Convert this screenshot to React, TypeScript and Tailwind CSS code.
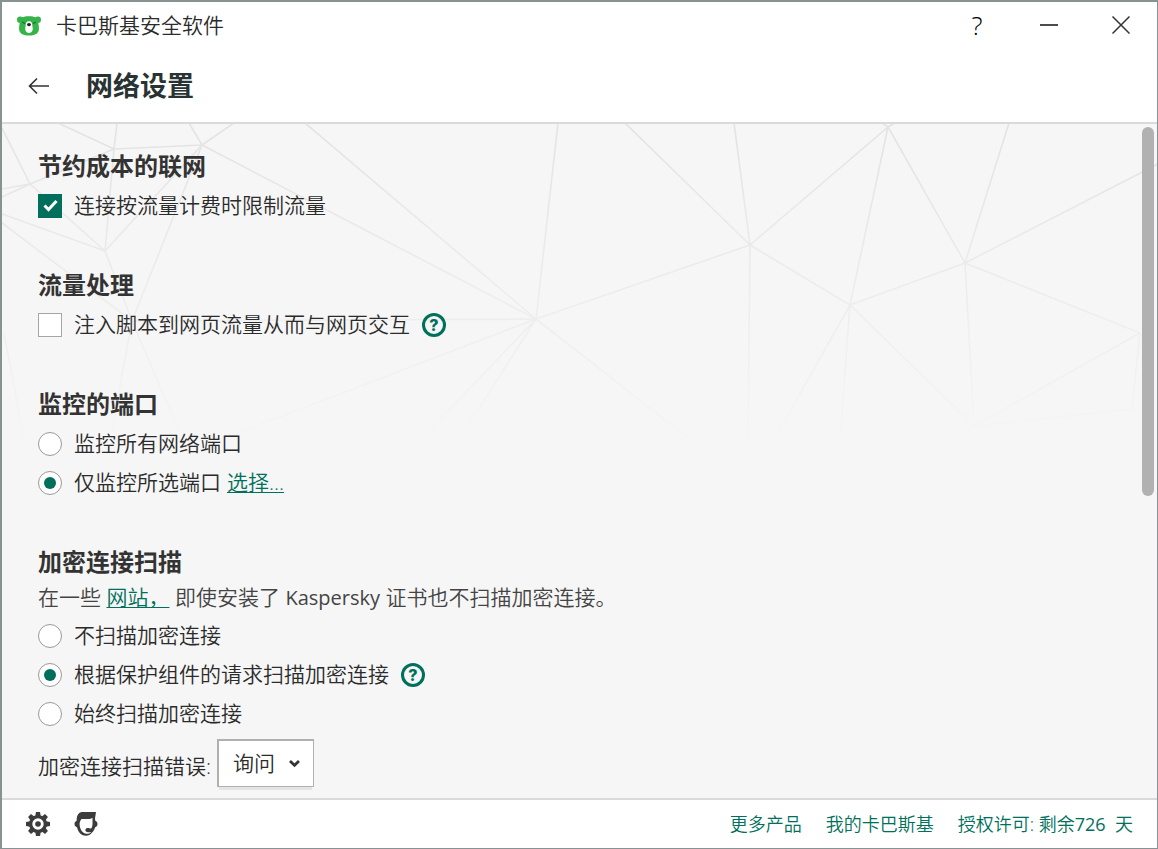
import { useState } from "react";
import type { ReactNode } from "react";

type Point = [number, number];

const MESH_LINES: [Point, Point][] = [
  [[58, 123], [114, 149]],
  [[117, 123], [114, 149]],
  [[114, 149], [202, 145]],
  [[114, 149], [30, 184]],
  [[114, 149], [105, 251]],
  [[189, 123], [202, 145]],
  [[234, 123], [202, 145]],
  [[202, 145], [105, 251]],
  [[202, 145], [132, 321]],
  [[202, 145], [536, 319]],
  [[2, 128], [30, 184]],
  [[2, 189], [30, 184]],
  [[2, 197], [30, 184]],
  [[30, 184], [105, 251]],
  [[2, 214], [105, 251]],
  [[2, 223], [132, 321]],
  [[105, 251], [132, 321]],
  [[132, 321], [536, 319]],
  [[132, 321], [110, 440]],
  [[132, 321], [183, 440]],
  [[4, 333], [24, 440]],
  [[305, 123], [536, 319]],
  [[558, 123], [536, 319]],
  [[536, 319], [750, 245]],
  [[536, 319], [688, 438]],
  [[536, 319], [230, 436]],
  [[536, 319], [425, 435]],
  [[536, 319], [459, 440]],
  [[625, 123], [750, 245]],
  [[734, 123], [750, 245]],
  [[750, 245], [888, 127]],
  [[750, 245], [850, 305]],
  [[750, 245], [748, 438]],
  [[882, 123], [888, 127]],
  [[895, 123], [888, 127]],
  [[888, 127], [850, 305]],
  [[888, 127], [965, 263]],
  [[1009, 123], [965, 263]],
  [[965, 263], [1158, 164]],
  [[965, 263], [850, 305]],
  [[965, 263], [1140, 333]],
  [[965, 263], [974, 426]],
  [[850, 305], [775, 438]],
  [[850, 305], [840, 438]],
  [[850, 305], [974, 426]],
  [[974, 426], [1140, 333]],
  [[974, 426], [1132, 409]],
  [[1140, 333], [1132, 409]],
];

function MeshBackground() {
  return (
    <svg
      className="pointer-events-none absolute inset-x-0 top-0 h-80 w-full"
      viewBox="2 124 1155 320"
      preserveAspectRatio="xMidYMin slice"
      aria-hidden="true"
    >
      <defs>
        <linearGradient id="mesh" gradientUnits="userSpaceOnUse" x1="0" y1="124" x2="0" y2="455">
          <stop offset="0" stopColor="#e3e3e3" />
          <stop offset="1" stopColor="#e3e3e3" stopOpacity="0" />
        </linearGradient>
      </defs>
      <path
        d={MESH_LINES.map(([a, b]) => `M${a[0]} ${a[1]}L${b[0]} ${b[1]}`).join("")}
        stroke="url(#mesh)"
        strokeWidth="1.6"
        fill="none"
      />
    </svg>
  );
}

function BearLogo() {
  return (
    <svg width="24" height="20" viewBox="0 0 24 20" aria-hidden="true">
      <g fill="#35b44a">
        <circle cx="3.2" cy="3.8" r="3.2" />
        <circle cx="20.8" cy="3.8" r="3.2" />
        <path d="M12 .2c3.6 0 6.600 .5 8 2.300 1.300 1.700 1.200 4 1.600 6.500.3 1.700.5 3.200.2 5.200C21.100 17.700 17.500 19.600 12 19.600S2.900 17.700 2.200 14.200c-.3-2-.1-3.500.2-5.200C2.800 6.500 2.700 4.200 4 2.500 5.400.7 8.400.2 12 .2z" />
      </g>
      <path d="M12 5.300c2.300 0 3.200 1.600 3.300 3.800.1 2 .5 2.600.5 3.700 0 2.700-1.600 4.200-3.800 4.200s-3.800-1.500-3.800-4.200c0-1.100.4-1.700.5-3.700.1-2.200 1-3.800 3.300-3.800z" fill="#fff" />
      <ellipse cx="12" cy="8.600" rx="2" ry="1.600" fill="#222" />
      <path d="M5.600 6.400l2 .8M18.400 6.400l-2 .8" stroke="#1c6b2c" strokeWidth="1.200" strokeLinecap="round" />
    </svg>
  );
}

const GEAR_ANGLES = [0, 45, 90, 135, 180, 225, 270, 315];

function GearIcon() {
  return (
    <svg width="24" height="24" viewBox="0 0 24 24" aria-hidden="true">
      <g fill="#3c3c3c">
        {GEAR_ANGLES.map((angle) => (
          <path key={angle} d="M9.300 4 10 0h4l.7 4z" transform={`rotate(${angle} 12 12)`} />
        ))}
      </g>
      <circle cx="12" cy="12" r="7.400" fill="none" stroke="#3c3c3c" strokeWidth="3.400" />
      <circle cx="12" cy="12" r="2.800" fill="#3c3c3c" />
    </svg>
  );
}

function SupportIcon() {
  return (
    <svg width="24" height="24" viewBox="0 0 24 24" aria-hidden="true">
      <path
        fill="#3c3c3c"
        d="M7.500 0H22l-1 6.500.3 2.300c1.400.5 2.200 1.500 2.200 3.200s-.8 2.800-2.300 3.300c-.7 2.200-1.700 4-3.100 5.200-1.700 2.200-3.700 3.300-6.100 3.300-4.500 0-7.900-3.500-9-8.500C1.500 14.800.5 13.700.5 12s1-2.700 2.200-3.200C2.500 4.500 4 .8 7.500 0z"
      />
      <path
        fill="#fff"
        d="M7.500 7H14c2 0 3.400-.3 4.500-1.200V12c0 1.800-.5 3.300-1.300 4.500h-1.400c-1-.8-3.700-.6-4.300.8-.6 1.600.6 2.900 2.500 2.900h3.300c-1.300 1-2.800 1.500-4.700 1.500-3.700 0-7-4.200-7-9.700 0-2 .9-4 1.900-5z"
      />
    </svg>
  );
}

function HelpButton({ label }: { label: string }) {
  return (
    <button
      type="button"
      aria-label={label}
      className="ml-3 flex size-6 items-center justify-center rounded-full border-3 border-[#00705c] font-['Inter'] text-base leading-none font-extrabold text-[#00705c]"
    >
      ?
    </button>
  );
}

function Section({ title, children }: { title: string; children: ReactNode }) {
  return (
    <section>
      <h2 className="mb-0.5 text-2xl leading-9 font-bold text-[#333]">{title}</h2>
      {children}
    </section>
  );
}

interface CheckRowProps {
  label: string;
  checked: boolean;
  onChange: (value: boolean) => void;
  children?: ReactNode;
}

function CheckRow({ label, checked, onChange, children }: CheckRowProps) {
  return (
    <div className="flex h-[39px] items-center">
      <label className="flex items-center gap-3">
        <span className="relative size-6">
          <input
            type="checkbox"
            checked={checked}
            onChange={(e) => onChange(e.target.checked)}
            className="peer block size-6 appearance-none border border-[#a6a6a6] bg-white checked:border-[#00705c] checked:bg-[#00705c]"
          />
          <svg
            className="pointer-events-none absolute inset-0 hidden peer-checked:block"
            viewBox="0 0 24 24"
            fill="none"
            stroke="#fff"
            strokeWidth="3"
            aria-hidden="true"
          >
            <path d="M6.500 11.500l4 4 8-8.500" />
          </svg>
        </span>
        {label}
      </label>
      {children}
    </div>
  );
}

interface RadioRowProps {
  name: string;
  label: string;
  checked: boolean;
  onSelect: () => void;
  children?: ReactNode;
}

function RadioRow({ name, label, checked, onSelect, children }: RadioRowProps) {
  return (
    <div className="flex h-[39px] items-center">
      <label className="flex items-center gap-3">
        <input
          type="radio"
          name={name}
          checked={checked}
          onChange={onSelect}
          className="grid size-6 appearance-none place-content-center rounded-full border border-[#999] bg-white before:size-3 before:rounded-full checked:before:bg-[#00705c]"
        />
        {label}
      </label>
      {children}
    </div>
  );
}

export default function App() {
  const [limitTraffic, setLimitTraffic] = useState(true);
  const [injectScript, setInjectScript] = useState(false);
  const [ports, setPorts] = useState("selected");
  const [scan, setScan] = useState("request");

  return (
    <div className="flex h-screen flex-col overflow-hidden border-t-2 border-r border-b border-l-2 border-[#879393] bg-white font-['Open_Sans','Noto_Sans_CJK_SC',sans-serif] text-[21px] font-[350] text-[#2b2b2b]">
      <div className="flex h-12 shrink-0 items-center pl-[15px]">
        <BearLogo />
        <h1 className="ml-[15px] flex-1 pb-0.5 leading-8">卡巴斯基安全软件</h1>
        <button type="button" aria-label="帮助" className="h-12 w-18 pb-0.5 text-[26px] leading-none text-black">
          ?
        </button>
        <button type="button" aria-label="最小化" className="flex h-12 w-18 items-center justify-center pb-0.5">
          <svg width="18" height="18" viewBox="0 0 18 18" stroke="#111" strokeWidth="1.500" aria-hidden="true">
            <path d="M0 9h18" />
          </svg>
        </button>
        <button type="button" aria-label="关闭" className="flex h-12 w-18 items-center justify-center pb-0.5">
          <svg width="18" height="18" viewBox="0 0 18 18" stroke="#333" strokeWidth="1.500" aria-hidden="true">
            <path d="M.5.5l17 17M17.500.5l-17 17" />
          </svg>
        </button>
      </div>

      <header className="flex h-[74px] shrink-0 items-center border-b-2 border-[#dadada] pl-[26px]">
        <button type="button" aria-label="返回">
          <svg width="22" height="18" viewBox="0 0 22 18" fill="none" stroke="#333" strokeWidth="1.600" aria-hidden="true">
            <path d="M9 1.500L1.500 9 9 16.500M1.500 9H21" />
          </svg>
        </button>
        <h2 className="ml-9 text-[27px] leading-10 font-bold text-[#293333]">网络设置</h2>
      </header>

      <main className="relative flex min-h-0 flex-1 overflow-hidden bg-[#f6f6f6]">
        <MeshBackground />
        <div className="relative flex flex-1 flex-col gap-[42px] pt-6 pl-9">
          <Section title="节约成本的联网">
            <CheckRow label="连接按流量计费时限制流量" checked={limitTraffic} onChange={setLimitTraffic} />
          </Section>

          <Section title="流量处理">
            <CheckRow label="注入脚本到网页流量从而与网页交互" checked={injectScript} onChange={setInjectScript}>
              <HelpButton label="关于脚本注入" />
            </CheckRow>
          </Section>

          <Section title="监控的端口">
            <RadioRow name="ports" label="监控所有网络端口" checked={ports === "all"} onSelect={() => setPorts("all")} />
            <RadioRow
              name="ports"
              label="仅监控所选端口"
              checked={ports === "selected"}
              onSelect={() => setPorts("selected")}
            >
              <a href="#ports" className="ml-1.5 text-[#00705c] underline decoration-1 underline-offset-2">
                选择...
              </a>
            </RadioRow>
          </Section>

          <Section title="加密连接扫描">
            <p className="mb-1 leading-[30px] text-[#444]">
              在一些{" "}
              <a href="#sites" className="text-[#00705c] underline decoration-1 underline-offset-2">
                网站，
              </a>{" "}
              即使安装了 <span className="text-xl leading-none font-normal">Kaspersky</span> 证书也不扫描加密连接。
            </p>
            <RadioRow name="scan" label="不扫描加密连接" checked={scan === "never"} onSelect={() => setScan("never")} />
            <RadioRow
              name="scan"
              label="根据保护组件的请求扫描加密连接"
              checked={scan === "request"}
              onSelect={() => setScan("request")}
            >
              <HelpButton label="关于加密连接扫描" />
            </RadioRow>
            <RadioRow name="scan" label="始终扫描加密连接" checked={scan === "always"} onSelect={() => setScan("always")} />
            <div className="mt-1.5 flex items-center gap-1.5">
              <label htmlFor="scan-errors" className="pt-1.5 leading-8">
                加密连接扫描错误:
              </label>
              <div className="relative">
                <select
                  id="scan-errors"
                  className="block h-12 w-[97px] appearance-none border-t-2 border-r border-b border-l-2 border-[#b0b0b0] bg-white pl-3.5 shadow-[0_5px_0_-2px_#e4e4e4]"
                >
                  <option>询问</option>
                  <option>忽略</option>
                </select>
                <svg
                  className="pointer-events-none absolute top-5 right-3.5"
                  width="11"
                  height="9"
                  viewBox="0 0 11 9"
                  fill="none"
                  stroke="#333"
                  strokeWidth="2.800"
                  aria-hidden="true"
                >
                  <path d="M1 2l4.500 4.300L10 2" />
                </svg>
              </div>
            </div>
          </Section>
        </div>
        <div className="relative mt-[3px] mr-[3px] h-[369px] w-3 rounded-full bg-[#b1b1b1]" />
      </main>

      <footer className="flex h-[50px] shrink-0 items-center border-t-2 border-[#dadada] px-6 text-lg text-[#00705c]">
        <button type="button" aria-label="设置">
          <GearIcon />
        </button>
        <button type="button" aria-label="支持" className="ml-6">
          <SupportIcon />
        </button>
        <nav className="ml-auto flex gap-6 whitespace-pre">
          <a href="#products">更多产品</a>
          <a href="#account">我的卡巴斯基</a>
          <a href="#license">
            授权许可: 剩余<span className="font-normal">726</span>{"  "}天
          </a>
        </nav>
      </footer>
    </div>
  );
}
